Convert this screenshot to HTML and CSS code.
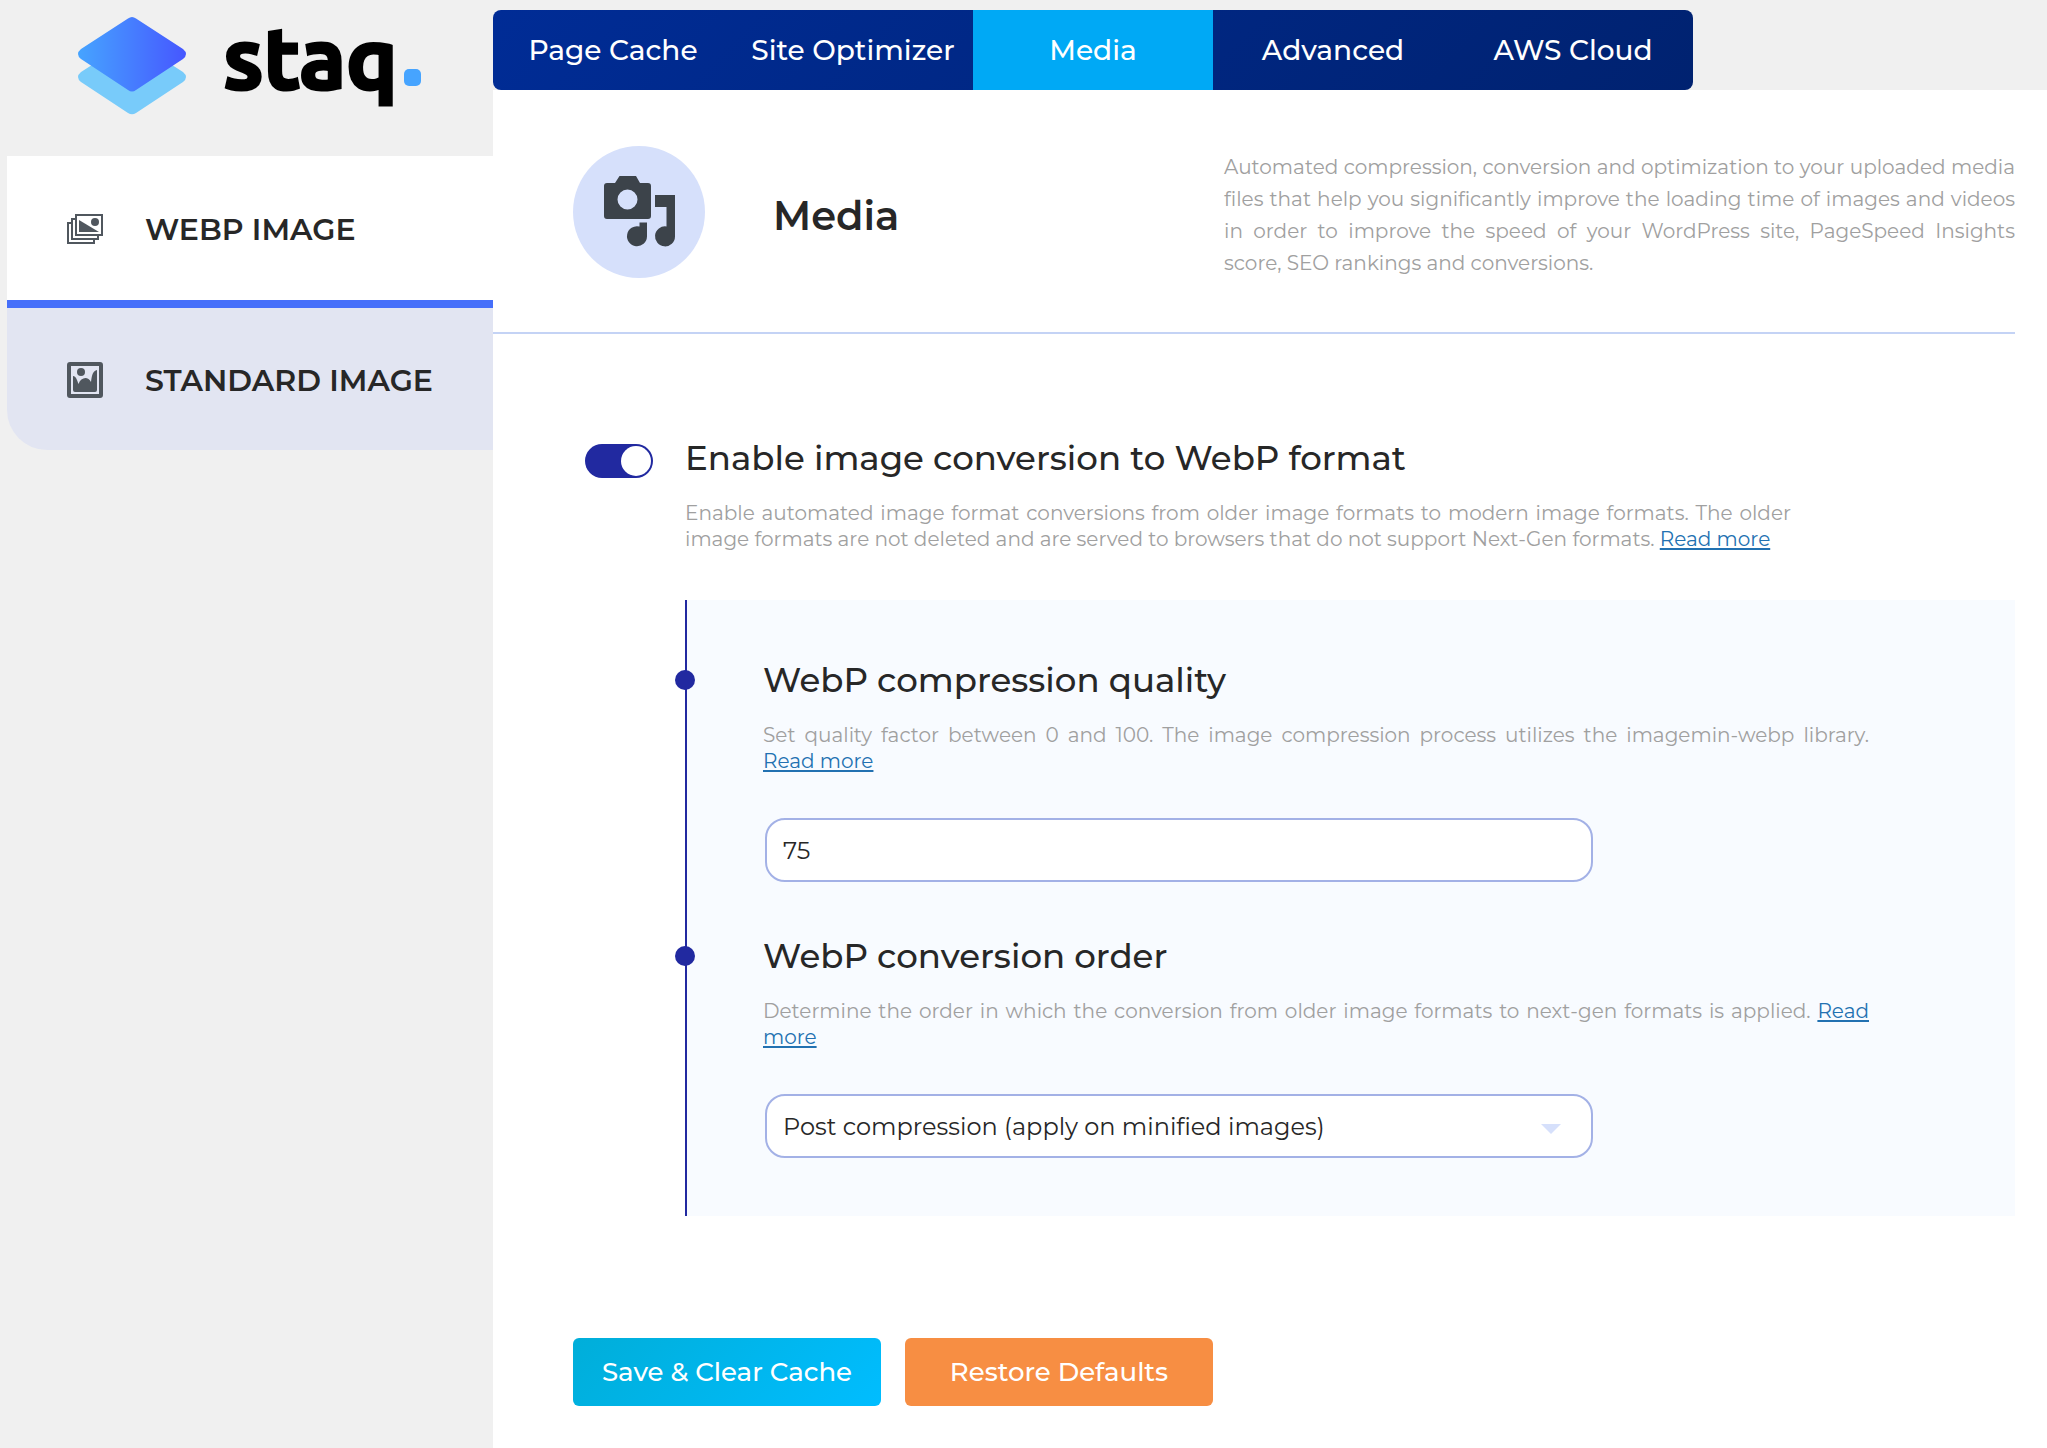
FILE: index.html
```html
<!DOCTYPE html>
<html lang="en">
<head>
  <meta charset="UTF-8">
  <title>Staq - Media</title>
  <meta name="viewport" content="width=device-width, initial-scale=1.0">
  <link rel="stylesheet" href="styles.css">
</head>

<body>
  <!-- === SIDEBAR === -->
  <aside class="sidebar">
    <a class="logo" href="#home">
      <svg class="logo-mark" viewBox="0 0 108 98" aria-hidden="true">
        <defs>
          <linearGradient id="logo-top" x1="0" y1="0" x2="1" y2="0">
            <stop offset="0" stop-color="#46a4ff"/>
            <stop offset="1" stop-color="#4657ff"/>
          </linearGradient>
        </defs>
        <path fill="#78cbfa" d="M50 25 L3 55 Q-3 60 3 65 L50 96 Q54 98.500 58 96 L105 65 Q111 60 105 55 L58 25 Q54 22 50 25Z"/>
        <path fill="url(#logo-top)" d="M50 1.500 L3 32 Q-3 37 3 42 L50 73 Q54 76 58 73 L105 42 Q111 37 105 32 L58 1.500 Q54 -1.500 50 1.500Z"/>
      </svg>
      <span class="logo-text">staq</span>
      <span class="logo-dot"></span>
    </a>

    <nav class="side-menu">
      <a class="side-item active" href="#webp">
        <svg width="36" height="36" viewBox="0 0 36 36" aria-hidden="true">
          <g fill="none" stroke="#50575e" stroke-width="2">
            <path d="M9 4H35V24H9Z"/>
            <path d="M9 8H5V28H31V24"/>
            <path d="M5 12H1V32H27V28"/>
          </g>
          <path fill="#50575e" d="M12 9L32 21H12Z"/>
          <circle cx="28" cy="11" r="4" fill="#50575e"/>
        </svg>
        WEBP IMAGE
      </a>
      <a class="side-item" href="#standard">
        <svg width="36" height="36" viewBox="0 0 36 36" aria-hidden="true">
          <rect x="2" y="2" width="32" height="32" rx="1" fill="none" stroke="#50575e" stroke-width="4"/>
          <circle cx="14" cy="10" r="4" fill="#50575e"/>
          <path fill="#50575e" d="M6 14C9 14 10 18 11.500 22C14 15 21 14 24 20C25 12 26 9 30 8V28Q30 30 28 30H8Q6 30 6 28Z"/>
        </svg>
        STANDARD IMAGE
      </a>
    </nav>
  </aside>

  <div class="content">
    <!-- === TOP TABS === -->
    <nav class="tabs">
      <a href="#page-cache">Page Cache</a>
      <a href="#site-optimizer">Site Optimizer</a>
      <a class="active" href="#media">Media</a>
      <a href="#advanced">Advanced</a>
      <a href="#aws-cloud">AWS Cloud</a>
    </nav>

    <main>
      <!-- === PAGE HEADER === -->
      <header class="page-header">
        <svg class="page-icon" viewBox="0 0 132 132" aria-hidden="true">
          <circle cx="66" cy="66" r="66" fill="#d6e0fb"/>
          <g fill="#3c434a">
            <path fill-rule="evenodd" d="M34 37H42L46.500 30H63L67 37H75Q78 37 78 40V70Q78 73 75 73H34Q31 73 31 70V40Q31 37 34 37ZM54.500 43.500A10 10 0 1 0 54.500 63.500A10 10 0 1 0 54.500 43.500Z"/>
            <path d="M82 49H102V90.500A10 10 0 1 1 93.500 80.500V61H82Z"/>
            <path d="M66.500 76.500H74V90.500A10 10 0 1 1 66.500 80.500Z"/>
          </g>
        </svg>
        <h1>Media</h1>
        <p>Automated compression, conversion and optimization to your uploaded media files that help you significantly improve the loading time of images and videos in order to improve the speed of your WordPress site, PageSpeed Insights score, SEO rankings and conversions.</p>
      </header>

      <form class="settings">
        <!-- === MAIN SWITCH === -->
        <div class="setting">
          <input class="toggle" type="checkbox" id="webp-enable" checked>
          <div class="setting-text">
            <h2><label for="webp-enable">Enable image conversion to WebP format</label></h2>
            <p class="help">Enable automated image format conversions from older image formats to modern image formats. The older image formats are not deleted and are served to browsers that do not support Next-Gen formats. <a href="#more">Read more</a></p>
          </div>
        </div>

        <!-- === SUB OPTIONS === -->
        <div class="panel">
          <div class="option">
            <h2><label for="quality">WebP compression quality</label></h2>
            <p class="help">Set quality factor between 0 and 100. The image compression process utilizes the imagemin-webp library. <a href="#more">Read more</a></p>
            <input class="field" type="text" id="quality" value="75">
          </div>
          <div class="option">
            <h2><label for="order">WebP conversion order</label></h2>
            <p class="help">Determine the order in which the conversion from older image formats to next-gen formats is applied. <a href="#more">Read more</a></p>
            <div class="select-wrap">
              <select class="field" id="order">
                <option>Post compression (apply on minified images)</option>
              </select>
            </div>
          </div>
        </div>

        <div class="actions">
          <button class="btn save" type="submit">Save &amp; Clear Cache</button>
          <button class="btn restore" type="reset">Restore Defaults</button>
        </div>
      </form>
    </main>
  </div>
</body>
</html>
```
FILE: styles.css
```css
:root {
  --page-bg: #f0f0f0;
  --text: #272727;
  --muted: #a0a0a0;
  --navy: #2129a0;
  --link: #2271b1;
  --field-border: #a3b1e6;
}

* {
  box-sizing: border-box;
}

body {
  margin: 0;
  display: flex;
  min-height: 100vh;
  background: var(--page-bg);
  color: var(--text);
  font-family: Montserrat, Inter, sans-serif;
}

h1, h2, p {
  margin: 0;
}

/* === SIDEBAR === */
.sidebar {
  flex: 0 0 493px;
  padding-left: 7px;
}

.logo {
  display: flex;
  height: 156px;
  padding: 17px 0 0 71px;
  color: #000;
  text-decoration: none;
}

.logo-mark {
  width: 108px;
  height: 98px;
}

.logo-text {
  margin-left: 37px;
  font: bold 86px/80px Ubuntu, "Noto Sans", sans-serif;
  -webkit-text-stroke: 3px #000;
}

.logo-dot {
  width: 17px;
  height: 17px;
  margin: 52px 0 0 6px;
  border-radius: 5px;
  background: #46a4ff;
}

.side-item {
  display: flex;
  align-items: center;
  gap: 42px;
  height: 142px;
  padding: 2px 0 0 60px;
  background: #e2e5f2;
  color: var(--text);
  font-size: 30px;
  font-weight: 600;
  text-decoration: none;
}

.side-item.active {
  height: 152px;
  background: #fff;
  border-bottom: 8px solid #466ffa;
}

.side-item:last-child {
  border-bottom-left-radius: 40px;
}

/* === TOP TABS === */
.content {
  flex: 1;
  min-width: 0;
  display: flex;
  flex-direction: column;
  padding-top: 10px;
}

.tabs {
  display: grid;
  grid-template-columns: repeat(5, 1fr);
  max-width: 1200px;
  height: 80px;
  border-radius: 8px;
  overflow: hidden;
  background: linear-gradient(135deg, #002c96, #002270);
}

.tabs a {
  display: flex;
  align-items: center;
  justify-content: center;
  color: #fff;
  font-size: 28px;
  font-weight: 500;
  text-decoration: none;
  white-space: nowrap;
}

.tabs a.active {
  background: #00a9f5;
}

main {
  flex: 1;
  padding-right: 32px;
  background: #fff;
}

/* === PAGE HEADER === */
.page-header {
  display: flex;
  align-items: center;
  height: 244px;
  padding: 2px 0 0 80px;
  border-bottom: 2px solid #c4d3f5;
}

.page-icon {
  flex: none;
  width: 132px;
  height: 132px;
}

.page-header h1 {
  flex: 1;
  padding: 6px 0 0 68px;
  font-size: 40px;
  font-weight: 600;
}

.page-header p {
  flex: 0 0 55%;
  max-width: 791px;
  padding-top: 6px;
  color: var(--muted);
  font-size: 20px;
  line-height: 32px;
  text-align: justify;
}

/* === SETTINGS === */
.settings {
  padding-top: 104px;
}

.setting {
  display: flex;
  gap: 32px;
  padding-left: 92px;
}

.toggle {
  appearance: none;
  flex: none;
  width: 68px;
  height: 34px;
  margin: 6px 0 0;
  padding: 2px;
  border-radius: 17px;
  background: var(--field-border);
  cursor: pointer;
}

.toggle::before {
  content: "";
  display: block;
  width: 30px;
  height: 30px;
  border-radius: 50%;
  background: #fff;
}

.toggle:checked {
  background: var(--navy);
}

.toggle:checked::before {
  margin-left: auto;
}

h2 {
  font-size: 34px;
  font-weight: 500;
  line-height: 40px;
}

.help {
  max-width: 1106px;
  margin-top: 22px;
  color: var(--muted);
  font-size: 20px;
  line-height: 26px;
  text-align: justify;
}

.help a {
  color: var(--link);
  text-decoration-thickness: 2px;
  text-underline-offset: 2px;
}

.panel {
  display: grid;
  gap: 54px;
  margin: 48px 0 0 192px;
  padding: 60px 40px 58px 76px;
  border-left: 2px solid var(--navy);
  background: #f8fbff;
}

.option h2 {
  position: relative;
}

/* bullet sitting on the panel line */
.option h2::before {
  content: "";
  position: absolute;
  top: 10px;
  left: -88px;
  width: 20px;
  height: 20px;
  border-radius: 50%;
  background: var(--navy);
}

.field {
  appearance: none;
  display: block;
  width: 100%;
  height: 64px;
  padding: 0 16px;
  border: 2px solid var(--field-border);
  border-radius: 20px;
  background: #fff;
  color: var(--text);
  font: 24px Montserrat, Inter, sans-serif;
}

.option > .field,
.select-wrap {
  max-width: 828px;
  margin: 44px 0 0 2px;
}

.select-wrap {
  position: relative;
}

.select-wrap::after {
  content: "";
  position: absolute;
  top: 30px;
  right: 32px;
  border: 10px solid transparent;
  border-top-color: #d6e0fb;
  border-bottom: 0;
  pointer-events: none;
}

/* === BUTTONS === */
.actions {
  display: flex;
  gap: 24px;
  padding: 122px 0 42px 80px;
}

.btn {
  width: 308px;
  height: 68px;
  border: 0;
  border-radius: 6px;
  color: #fff;
  font: 500 26px Montserrat, Inter, sans-serif;
  cursor: pointer;
}

.save {
  background: linear-gradient(135deg, #00aed9, #00bdff);
}

.restore {
  background: #f78e43;
}
```
